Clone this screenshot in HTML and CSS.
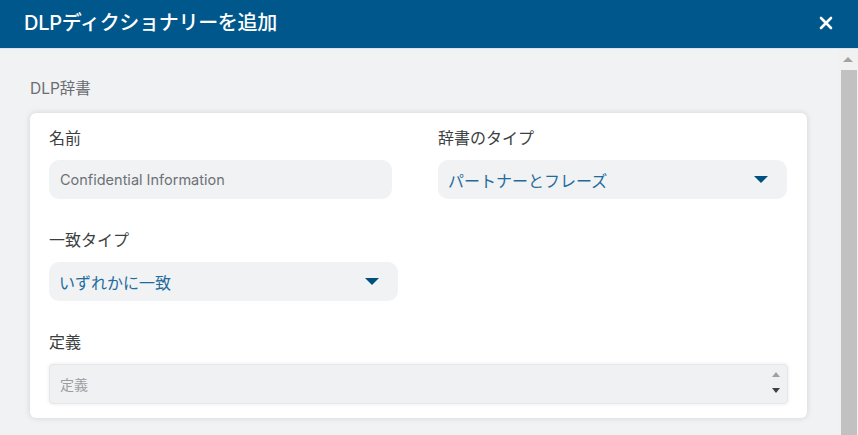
FILE: index.html
```html
<!DOCTYPE html>
<html lang="ja">
<head>
<meta charset="utf-8">
<link rel="stylesheet" href="styles.css">
</head>
<body>
<div class="modal">
  <header class="header">
    <h1 class="title">DLPディクショナリーを追加</h1>
    <svg class="close" width="14" height="14" viewBox="0 0 14 14"><path d="M2 2 L12 12 M12 2 L2 12" stroke="#fff" stroke-width="2.6" stroke-linecap="round"/></svg>
  </header>
  <div class="body">
    <div class="content">
      <div class="section-title">DLP辞書</div>
      <div class="card">
        <div class="row">
          <div class="field f-name">
            <label class="label">名前</label>
            <div class="input">Confidential Information</div>
          </div>
          <div class="field f-type">
            <label class="label">辞書のタイプ</label>
            <div class="select"><span>パートナーとフレーズ</span><span class="caret"></span></div>
          </div>
        </div>
        <div class="row">
          <div class="field f-match">
            <label class="label">一致タイプ</label>
            <div class="select"><span>いずれかに一致</span><span class="caret"></span></div>
          </div>
        </div>
        <div class="field f-def">
          <label class="label">定義</label>
          <div class="textarea"><span class="placeholder">定義</span>
            <span class="spin-up"></span><span class="spin-down"></span>
          </div>
        </div>
      </div>
    </div>
    <div class="scrollbar">
      <div class="sb-up"></div>
      <div class="sb-thumb"></div>
    </div>
  </div>
</div>
</body>
</html>
```
FILE: styles.css
```css
* { box-sizing: border-box; }
html, body { margin: 0; padding: 0; }
body {
  width: 858px; height: 435px; overflow: hidden;
  font-family: Inter, "Noto Sans CJK JP", sans-serif;
  background: #f1f2f4;
}
.modal { display: flex; flex-direction: column; height: 435px; }
.header {
  height: 49px; background: #00578c;
  display: flex; align-items: center; justify-content: space-between;
  padding: 0 25px 0 24px;
  border-bottom: 1px solid #d9e4ee;
}
.title {
  margin: 0; color: #fff; font-size: 20px; font-weight: 500;
  letter-spacing: -0.3px; line-height: 24px;
  padding-bottom: 2px;
}
.close { margin-top: -3px; }
.body { flex: 1; display: flex; }
.content { flex: 1; padding: 30px 31px 0 30px; }
.section-title { color: #6a6d71; font-size: 15.5px; line-height: 20px; margin-bottom: 14px; }
.card {
  background: #fff; border-radius: 6px;
  box-shadow: 0 0 6px rgba(0,0,0,0.13);
  padding: 14px 19px 14px 19px;
  height: 305px;
}
.row { display: flex; gap: 40px; }
.field { display: flex; flex-direction: column; }
.label { font-size: 16px; color: #3c3f42; line-height: 22px; margin-bottom: 11px; }
.f-name { width: 343px; }
.f-type { width: 349px; margin-left: 6px; }
.f-match { width: 349px; margin-top: 30px; }
.f-def { margin-top: 30px; }
.input, .select {
  height: 39px; border-radius: 10px; background: #f0f2f4;
  display: flex; align-items: center; padding: 0 11px;
}
.input { color: #6d7175; font-size: 14.5px; }
.select {
  justify-content: space-between; color: #1f6b9c; font-size: 16px;
  padding: 0 19px 0 10px;
}
.caret {
  width: 0; height: 0;
  border-left: 7px solid transparent; border-right: 7px solid transparent;
  border-top: 7px solid #00507f;
}
.textarea {
  position: relative; height: 40px; background: #f0f1f3;
  border: 1px solid #e6e7e9; border-radius: 4px;
  box-shadow: 0 0 4px rgba(0,0,0,0.08);
  display: flex; align-items: center; padding: 0 10px;
}
.placeholder { color: #9a9ea2; font-size: 14px; }
.spin-up, .spin-down {
  position: absolute; right: 7px; width: 0; height: 0;
  border-left: 4.5px solid transparent; border-right: 4.5px solid transparent;
}
.spin-up { top: 7px; border-bottom: 5px solid #a0a0a0; }
.spin-down { top: 23px; border-top: 5px solid #404040; }
.scrollbar { width: 20px; background: #f1f1f1; display: flex; flex-direction: column; align-items: center; }
.sb-up {
  margin-top: 8px; width: 0; height: 0;
  border-left: 5px solid transparent; border-right: 5px solid transparent;
  border-bottom: 5px solid #a3a3a3;
}
.sb-thumb { margin-top: 8px; width: 16px; flex: 1; background: #c1c1c1; margin-left: 2px; }
```
